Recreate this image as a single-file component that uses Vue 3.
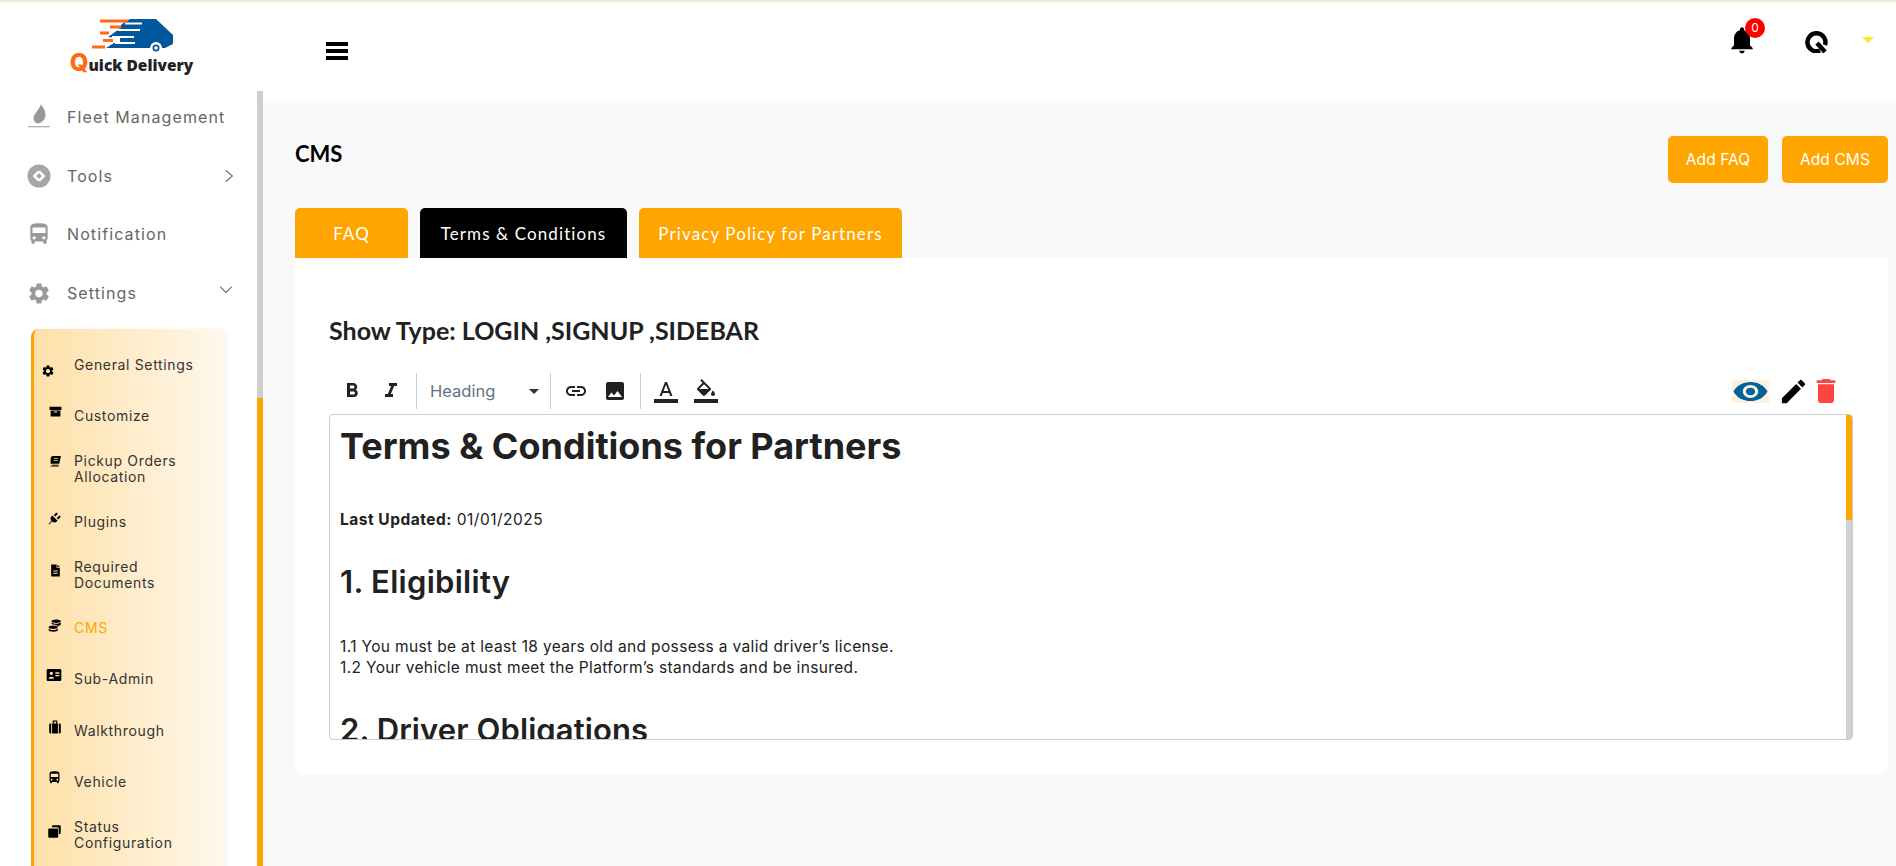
<script setup>
const icons = {
  gear: 'M19.14 12.94c.04-.3.06-.61.06-.94 0-.32-.02-.64-.07-.94l2.03-1.58c.18-.14.23-.41.12-.61l-1.92-3.32c-.12-.22-.37-.29-.59-.22l-2.39.96c-.5-.38-1.03-.7-1.62-.94l-.36-2.54c-.04-.24-.24-.41-.48-.41h-3.84c-.24 0-.43.17-.47.41l-.36 2.54c-.59.24-1.13.57-1.62.94l-2.39-.96c-.22-.08-.47 0-.59.22L2.74 8.87c-.12.21-.08.47.12.61l2.03 1.58c-.05.3-.09.63-.09.94s.02.64.07.94l-2.03 1.58c-.18.14-.23.41-.12.61l1.92 3.32c.12.22.37.29.59.22l2.39-.96c.5.38 1.03.7 1.62.94l.36 2.54c.05.24.24.41.48.41h3.84c.24 0 .44-.17.47-.41l.36-2.54c.59-.24 1.13-.56 1.62-.94l2.39.96c.22.08.47 0 .59-.22l1.92-3.32c.12-.22.07-.47-.12-.61l-2.01-1.58zM12 15.6c-1.98 0-3.6-1.62-3.6-3.6s1.62-3.6 3.6-3.6 3.6 1.62 3.6 3.6-1.62 3.6-3.6 3.6z',
  bus: 'M4 16c0 .88.39 1.67 1 2.22V20c0 .55.45 1 1 1h1c.55 0 1-.45 1-1v-1h8v1c0 .55.45 1 1 1h1c.55 0 1-.45 1-1v-1.78c.61-.55 1-1.34 1-2.22V6c0-3.5-3.58-4-8-4s-8 .5-8 4v10zm3.5 1c-.83 0-1.5-.67-1.5-1.5S6.67 14 7.5 14s1.5.67 1.5 1.5S8.33 17 7.5 17zm9 0c-.83 0-1.5-.67-1.5-1.5s.67-1.5 1.5-1.5 1.5.67 1.5 1.5-.67 1.5-1.5 1.5zm1.5-6H6V6h12v5z',
  box: 'M1 3h22v6H1zM3 10h18v11H3zM9 12v2h6v-2z',
  book: 'M7 2h15l-3 14H6c-2 0-3 1-3 2V7c0-3 2-5 4-5zM5 18h13l-.5 2H5zM5 22c-2 0-3-1-3-3 0 1 1 2 3 2h13l-.3 1zM9 6v1.500h8V6zM8.500 9v1.500h8V9z',
  plug: 'M1 22l5-5c-2.500-3-2-6 0-8l1.500-1.500 9 9L15 18c-2 2-5 2.500-8 0l-5 5zM10 7l4.500-4.500 2.500 2.500-4.500 4.500zM15 12l4.500-4.500 2.500 2.500-4.500 4.500z',
  file: 'M4 1h10v6h6v15c0 .6-.4 1-1 1H5c-.6 0-1-.4-1-1zM15.500 1L20 5.500h-4.500zM8 12v2h8v-2zM8 16v2h8v-2z',
  coins: 'M14 1c4.500 0 8 1.200 8 3s-3.500 3-8 3-8-1.200-8-3 3.500-3 8-3zM22 6v3c0 1.500-2 2.700-5.500 3-1-1.500-3.500-2.300-7-2.500-2-.4-3.500-1.200-3.500-2V6c2 1.500 5 2.200 8 2.200S20 7.500 22 6zM9 11c4.500 0 8 1.200 8 3s-3.500 3-8 3-8-1.200-8-3 3.500-3 8-3zM17 16.500v2.500c0 1.800-3.500 3-8 3s-8-1.200-8-3v-2.500c2 1.500 5 2.200 8 2.200s6-.7 8-2.200z',
  idcard: 'M3 3h18c1.100 0 2 .9 2 2v14c0 1.100-.9 2-2 2H3c-1.100 0-2-.9-2-2V5c0-1.100.9-2 2-2zM8 7a2.500 2.500 0 100 5 2.500 2.500 0 000-5zM4 17.500h8c0-4-8-4-8 0zM14 8v2h6V8zM14 12v2h6v-2z',
  suitcase: 'M8 1h8v5h-2V3h-4v3H8zM2 8c0-1 1-2 2-2h1.500v17H4c-1 0-2-1-2-2zM7 6h10v17H7zM18.500 6H20c1 0 2 1 2 2v13c0 1-1 2-2 2h-1.500z',
  copy: 'M10 2h10c1.100 0 2 .9 2 2v10c0 1.100-.9 2-2 2h-1V8c0-1.700-1.300-3-3-3H8V4c0-1.100.9-2 2-2zM4 7h12c1.100 0 2 .9 2 2v11c0 1.100-.9 2-2 2H4c-1.100 0-2-.9-2-2V9c0-1.100.9-2 2-2z'
}
const subItems = [
  { label: ['General Settings'], icon: 'gear', size: 14, x: -7, y: 6 },
  { label: ['Customize'], icon: 'box', size: 13, x: 0, y: -5 },
  { label: ['Pickup Orders', 'Allocation'], icon: 'book', size: 13, x: 0, y: -8 },
  { label: ['Plugins'], icon: 'plug', size: 14, x: 0, y: -4 },
  { label: ['Required', 'Documents'], icon: 'file', size: 13, x: 0, y: -5 },
  { label: ['CMS'], icon: 'coins', size: 14, x: 0, y: -3, active: true },
  { label: ['Sub-Admin'], icon: 'idcard', size: 16, x: 0, y: -5 },
  { label: ['Walkthrough'], icon: 'suitcase', size: 14, x: 0, y: -4 },
  { label: ['Vehicle'], icon: 'bus', size: 15, x: 0, y: -5 },
  { label: ['Status', 'Configuration'], icon: 'copy', size: 15, x: 0, y: -4 }
]
const tabs = [
  { label: 'FAQ', w: 113 },
  { label: 'Terms & Conditions', w: 207, active: true },
  { label: 'Privacy Policy for Partners', w: 263 }
]
const tools = {
  bold: 'M15.6 10.79c.97-.67 1.65-1.77 1.65-2.79 0-2.26-1.75-4-4-4H7v14h7.04c2.09 0 3.71-1.7 3.71-3.79 0-1.52-.86-2.82-2.15-3.42zM10 6.5h3c.83 0 1.5.67 1.5 1.5s-.67 1.5-1.5 1.5h-3v-3zm3.5 9H10v-3h3.5c.83 0 1.5.67 1.5 1.5s-.67 1.5-1.5 1.5z',
  italic: 'M10 4v3h2.21l-3.42 8H6v3h8v-3h-2.21l3.42-8H18V4z',
  link: 'M3.9 12c0-1.71 1.39-3.1 3.1-3.1h4V7H7c-2.76 0-5 2.24-5 5s2.24 5 5 5h4v-1.9H7c-1.71 0-3.1-1.39-3.1-3.1zM8 13h8v-2H8v2zm9-6h-4v1.9h4c1.71 0 3.1 1.39 3.1 3.1s-1.39 3.1-3.1 3.1h-4V17h4c2.76 0 5-2.24 5-5s-2.24-5-5-5z',
  image: 'M21 19V5c0-1.1-.9-2-2-2H5c-1.1 0-2 .9-2 2v14c0 1.1.9 2 2 2h14c1.1 0 2-.9 2-2zM8.500 13.500l2.500 3.010L14.500 12l4.500 6H5l3.500-4.500z',
  text: 'M0 20h24v4H0zM11 3L5.500 17h2.250l1.120-3h6.250l1.120 3h2.250L13 3h-2zm-1.380 9L12 5.670 14.380 12H9.620z',
  fill: 'M16.560 8.940L7.620 0 6.210 1.410l2.380 2.380-5.150 5.150c-.59.59-.59 1.540 0 2.120l5.500 5.500c.29.29.68.44 1.060.44s.77-.15 1.060-.44l5.500-5.500c.59-.58.59-1.530 0-2.120zM5.210 10L10 5.210 14.790 10H5.210zM19 11.500s-2 2.170-2 3.500c0 1.100.9 2 2 2s2-.9 2-2c0-1.330-2-3.500-2-3.500zM0 20h24v4H0z',
  eye: 'M12 4.500C7 4.500 2.730 7.610 1 12c1.730 4.390 6 7.500 11 7.500s9.270-3.110 11-7.500c-1.730-4.390-6-7.500-11-7.500zM12 17c-2.760 0-5-2.240-5-5s2.240-5 5-5 5 2.240 5 5-2.240 5-5 5zm0-8c-1.660 0-3 1.340-3 3s1.340 3 3 3 3-1.340 3-3-1.340-3-3-3z',
  edit: 'M3 17.250V21h3.750L17.810 9.940l-3.750-3.750L3 17.250zM20.710 7.040c.39-.39.39-1.020 0-1.410l-2.340-2.340c-.39-.39-1.020-.39-1.410 0l-1.830 1.830 3.750 3.750 1.830-1.830z',
  trash: 'M6 19c0 1.100.9 2 2 2h8c1.100 0 2-.9 2-2V7H6v12zM19 4h-3.500l-1-1h-5l-1 1H5v2h14V4z',
  bell: 'M12 22c1.100 0 2-.9 2-2h-4c0 1.100.89 2 2 2zm6-6v-5c0-3.070-1.640-5.640-4.500-6.320V4c0-.83-.67-1.500-1.500-1.500s-1.500.67-1.500 1.500v.68C7.630 5.360 6 7.920 6 11v5l-2 2v1h16v-1l-2-2z'
}
</script>

<template>
  <div class="app">
    <aside class="sidebar">
      <div class="brand">
        <svg class="truck" viewBox="0 0 81 36" width="81" height="36">
          <path d="M38 0H64L81 16V25L73 29H14L22 24H28L28 19L16 18L26 11L30 5Z" fill="#00579b" />
          <path d="M33 4.500H50M26 11H48M20 18H42M23 24H43" stroke="#fff" stroke-width="2.200" />
          <path d="M8 2H36M18 8H29M8 14H17M11 21.500H21M0 28H13" stroke="#ff6a13" stroke-width="3" />
          <circle cx="64" cy="29" r="6" fill="#fff" />
          <circle cx="64" cy="29" r="3.500" fill="#00579b" />
          <circle cx="64" cy="29" r="1.800" fill="#fff" />
        </svg>
        <div class="brand-name"><span class="brand-q">Q</span>uick Delivery</div>
      </div>
      <div class="side-body">
        <nav class="nav">
          <div class="nav-row">
            <svg class="nav-icon" viewBox="0 0 24 24" width="26" height="26" fill="#999">
              <path d="M14 0c1 3 4 5 4 10 0 5-4 8-7 8-2 0-4-2-4-5 0-4 5-7 7-13zM2 20.500h20v1H2z" />
            </svg>
            <span>Fleet Management</span>
          </div>
          <div class="nav-row">
            <svg class="nav-icon" viewBox="0 0 24 24" width="24" height="24">
              <circle cx="12" cy="12" r="11.500" fill="#a6a6a6" />
              <path d="M11 6.500l1.800 1.800-3.700 3.700 2 2 1.800 1.800-1.800 1.800-5.600-5.600zM13 17.500l-1.800-1.800 3.700-3.700-2-2-1.800-1.800 1.800-1.800 5.600 5.600z" fill="#fff" />
            </svg>
            <span>Tools</span>
            <svg class="chev" viewBox="0 0 12 18" width="10" height="16"><path d="M2 2l8 7-8 7" fill="none" stroke="#777" stroke-width="1.500" /></svg>
          </div>
          <div class="nav-row">
            <svg class="nav-icon" viewBox="0 0 24 24" width="26" height="26" fill="#999"><path :d="icons.bus" /></svg>
            <span>Notification</span>
          </div>
          <div class="nav-row">
            <svg class="nav-icon" viewBox="0 0 24 24" width="25" height="25" fill="#999"><path :d="icons.gear" /></svg>
            <span>Settings</span>
            <svg class="chev chev-down" viewBox="0 0 18 12" width="16" height="10"><path d="M2 2l7 7 7-7" fill="none" stroke="#777" stroke-width="1.500" /></svg>
          </div>
          <ul class="sub">
            <li
              v-for="item in subItems"
              :key="item.label[0]"
              class="sub-row"
              :class="{ active: item.active, two: item.label.length > 1 }"
            >
              <span class="sub-icon">
                <svg
                  viewBox="0 0 24 24"
                  :width="item.size"
                  :height="item.size"
                  fill="#000"
                  fill-rule="evenodd"
                  :style="{ transform: `translate(${item.x}px, ${item.y}px)` }"
                ><path :d="icons[item.icon]" /></svg>
              </span>
              <span class="sub-label"><span v-for="l in item.label" :key="l">{{ l }}</span></span>
            </li>
          </ul>
        </nav>
        <div class="side-scroll"><div class="side-track"></div><div class="side-thumb"></div></div>
      </div>
    </aside>

    <div class="main">
      <header class="topbar">
        <svg class="burger" viewBox="0 0 22 18" width="22" height="18"><path d="M0 0h22v4H0zM0 7h22v4H0zM0 14h22v4H0z" fill="#000" /></svg>
        <div class="top-right">
          <div class="bell">
            <svg viewBox="0 0 24 24" width="32" height="32" fill="#000"><path :d="tools.bell" /></svg>
            <span class="badge">0</span>
          </div>
          <svg class="q-mark" viewBox="0 0 24 24" width="24" height="24">
            <path d="M15 21.500A9 9 0 1 1 20 16" fill="none" stroke="#000" stroke-width="4.500" />
            <path d="M12 14l8 9" stroke="#000" stroke-width="4.500" />
          </svg>
          <span class="caret"></span>
        </div>
      </header>

      <main class="content">
        <div class="title-row">
          <h1 class="page-title">CMS</h1>
          <div class="actions">
            <button class="btn btn-faq">Add FAQ</button>
            <button class="btn btn-cms">Add CMS</button>
          </div>
        </div>
        <div class="tabs">
          <div
            v-for="t in tabs"
            :key="t.label"
            class="tab"
            :class="{ active: t.active }"
            :style="{ width: t.w + 'px' }"
          >{{ t.label }}</div>
        </div>
        <section class="card">
          <h2 class="show-type">Show Type: LOGIN ,SIGNUP ,SIDEBAR</h2>
          <div class="toolbar">
            <div class="tool-group">
              <svg class="tool" viewBox="0 0 24 24" width="24" height="24"><path :d="tools.bold" /></svg>
              <svg class="tool" viewBox="0 0 24 24" width="24" height="24"><path :d="tools.italic" /></svg>
            </div>
            <div class="heading-select">
              <span>Heading</span>
              <i class="select-caret"></i>
            </div>
            <div class="tool-group g-media">
              <svg class="tool" viewBox="0 0 24 24" width="24" height="24"><path :d="tools.link" /></svg>
              <svg class="tool" viewBox="0 0 24 24" width="24" height="24"><path :d="tools.image" /></svg>
            </div>
            <div class="tool-group g-color">
              <svg class="tool" viewBox="0 0 24 24" width="24" height="24"><path :d="tools.text" /></svg>
              <svg class="tool" viewBox="0 0 24 24" width="24" height="24"><path :d="tools.fill" /></svg>
            </div>
            <div class="tool-right">
              <svg class="eye" viewBox="0 3 24 18" preserveAspectRatio="none" width="37" height="23"><path :d="tools.eye" fill="#00629b" /></svg>
              <svg class="pencil" viewBox="0 0 24 24" width="31" height="31"><path :d="tools.edit" fill="#000" /></svg>
              <svg viewBox="0 0 24 24" width="32" height="32"><path :d="tools.trash" fill="#ff4444" /></svg>
            </div>
          </div>
          <div class="editor">
            <div class="doc">
              <h1>Terms &amp; Conditions for Partners</h1>
              <p class="updated"><strong>Last Updated:</strong> 01/01/2025</p>
              <h2>1. Eligibility</h2>
              <p class="clause">1.1 You must be at least 18 years old and possess a valid driver’s license.<br />1.2 Your vehicle must meet the Platform’s standards and be insured.</p>
              <h2 class="next">2. Driver Obligations</h2>
            </div>
            <div class="editor-scroll"><div class="editor-thumb"></div></div>
          </div>
        </section>
      </main>
    </div>
  </div>
</template>

<style>
html, body { margin: 0; padding: 0; overflow: hidden; }
</style>

<style scoped>
* { box-sizing: border-box; }
.app {
  display: flex;
  height: 866px;
  width: 1896px;
  overflow: hidden;
  border-top: 2px solid #f3e7d6;
  font-family: Inter, "Open Sans", sans-serif;
  background: #f9f9f9;
}
.sidebar {
  width: 263px;
  flex: none;
  background: #fff;
  display: flex;
  flex-direction: column;
  min-height: 0;
}
.brand {
  height: 89px;
  flex: none;
  display: flex;
  flex-direction: column;
  align-items: center;
  padding-top: 17px;
}
.truck { display: block; margin-left: 2px; }
.brand-name {
  font-family: "Open Sans", sans-serif;
  font-weight: 800;
  font-size: 15.500px;
  line-height: 20px;
  color: #222;
  margin-top: -2px;
  white-space: nowrap;
}
.brand-q { font-family: Inter, sans-serif; color: #ff6a13; font-size: 24px; line-height: 20px; }
.side-body { flex: 1; display: flex; min-height: 0; }
.nav { flex: 1; overflow: hidden; padding-right: 0; }
.side-scroll { width: 6px; flex: none; display: flex; flex-direction: column; }
.side-track { height: 307px; background: #cfcfcf; flex: none; }
.side-thumb { flex: 1; background: #ffa500; }
.nav-row {
  height: 58.600px;
  display: flex;
  align-items: center;
  font-size: 16px;
  letter-spacing: 1.100px;
  color: #666;
  padding-left: 26px;
  padding-right: 23px;
}
.nav-row .nav-icon { width: 26px; flex: none; margin-right: 15px; }
.nav-row:first-child { margin-top: -3px; }
.chev { margin-left: auto; }
.chev-down { margin-top: -6px; }
.sub {
  list-style: none;
  margin: 7px 0 0 31px;
  padding: 10px 0 40px;
  width: 195px;
  border-left: 3px solid #ffa500;
  border-radius: 8px 8px 0 0;
  background: linear-gradient(90deg, #ffe0a8, #fff8ec);
  box-shadow: 1px 0 3px rgba(0, 0, 0, .05);
}
.sub-row {
  height: 51.200px;
  display: flex;
  align-items: center;
  font-size: 14px;
  color: #333;
}
.sub-row.two { height: 55px; }
.sub-row.active { color: #ffa500; }
.sub-icon {
  width: 40px;
  flex: none;
  display: flex;
  align-items: center;
  justify-content: flex-end;
  padding-right: 12px;
}
.sub-label { display: flex; flex-direction: column; line-height: 16.500px; letter-spacing: .65px; }
.main { flex: 1; min-width: 0; display: flex; flex-direction: column; }
.topbar {
  height: 101px;
  flex: none;
  background: #fff;
  display: flex;
  align-items: flex-start;
  justify-content: space-between;
  padding: 40px 22px 0 63px;
}
.top-right { display: flex; align-items: center; margin-top: -18px; }
.bell { position: relative; width: 32px; height: 32px; margin-right: 47px; }
.bell svg { display: block; }
.badge {
  position: absolute;
  top: -6px;
  right: -7px;
  width: 20px;
  height: 20px;
  border-radius: 50%;
  background: #f00;
  color: #fff;
  font-size: 12px;
  line-height: 20px;
  text-align: center;
}
.q-mark { margin-right: 33px; margin-top: 2px; }
.caret {
  width: 0;
  height: 0;
  border-left: 6px solid transparent;
  border-right: 6px solid transparent;
  border-top: 6px solid #f1ef1f;
}
.content { flex: 1; padding: 32px 8px 0 32px; min-height: 0; }
.title-row { display: flex; justify-content: space-between; align-items: flex-start; height: 73px; }
.page-title {
  margin: 7px 0 0;
  font-family: Lato, sans-serif;
  font-weight: 700;
  font-size: 22px;
  line-height: 24px;
  color: #000;
}
.actions { display: flex; gap: 14px; margin-top: 1px; }
.btn {
  height: 47px;
  border: 0;
  border-radius: 5px;
  background: #ffa500;
  color: #fff;
  font-family: Inter, sans-serif;
  font-size: 15.500px;
  letter-spacing: .1px;
}
.btn-faq { width: 100px; }
.btn-cms { width: 106px; }
.tabs { display: flex; gap: 12px; height: 50px; }
.tab {
  height: 50px;
  background: #ffa500;
  color: #fff;
  border-radius: 5px 5px 0 0;
  font-family: Lato, sans-serif;
  font-size: 17px;
  letter-spacing: 1.100px;
  display: flex;
  align-items: center;
  justify-content: center;
}
.tab.active { background: #000; }
.card {
  background: #fff;
  border-radius: 0 0 8px 8px;
  height: 516px;
  padding: 57px 34px 0;
}
.show-type {
  margin: 0;
  font-family: Lato, sans-serif;
  font-weight: 700;
  font-size: 25px;
  line-height: 30px;
  color: #212121;
}
.toolbar { display: flex; align-items: center; height: 38px; margin-top: 27px; }
.tool-group { display: flex; align-items: center; height: 36px; }
.tool { display: block; fill: #222; }
.tool-group:first-child { padding-left: 11px; gap: 15px; padding-right: 13px; border-right: 1px solid #ccc; }
.heading-select {
  width: 134px;
  height: 36px;
  display: flex;
  align-items: center;
  justify-content: space-between;
  padding: 0 11px 0 13px;
  border-right: 1px solid #ccc;
  font-size: 16.500px;
  color: #5f7285;
}
.select-caret {
  width: 0;
  height: 0;
  border-left: 5px solid transparent;
  border-right: 5px solid transparent;
  border-top: 5px solid #333;
}
.g-media { gap: 15px; padding: 0 13px 0 13px; border-right: 1px solid #ccc; }
.g-color { gap: 16px; padding-left: 13px; }
.tool-right { margin-left: auto; display: flex; align-items: center; padding-right: 12px; gap: 3px; }
.eye { background: #fdf0dc; margin-right: 6px; }
.pencil { margin-right: -2px; }
.editor {
  height: 326px;
  margin-top: 4px;
  width: 1524px;
  border: 1px solid #ccc;
  border-radius: 4px;
  overflow: hidden;
  background: #fff;
  display: flex;
}
.doc { flex: 1; min-width: 0; overflow: hidden; padding: 7px 10px; color: #212121; }
.editor-scroll { width: 6px; flex: none; background: #cfcfcf; }
.editor-thumb { height: 105px; background: #ffa500; }
.doc h1 { margin: 0; font-size: 36px; line-height: 48px; font-weight: 700; }
.doc h2 { margin: 0; font-size: 31px; line-height: 40px; font-weight: 600; letter-spacing: .3px; }
.doc h2.next { letter-spacing: .1px; }
.doc p { margin: 0; font-size: 15.500px; line-height: 21px; letter-spacing: .35px; }
.doc .updated { padding-top: 39px; padding-bottom: 32px; letter-spacing: .5px; }
.doc strong { font-weight: 700; }
.clause { padding-top: 34px; padding-bottom: 32px; }
</style>
